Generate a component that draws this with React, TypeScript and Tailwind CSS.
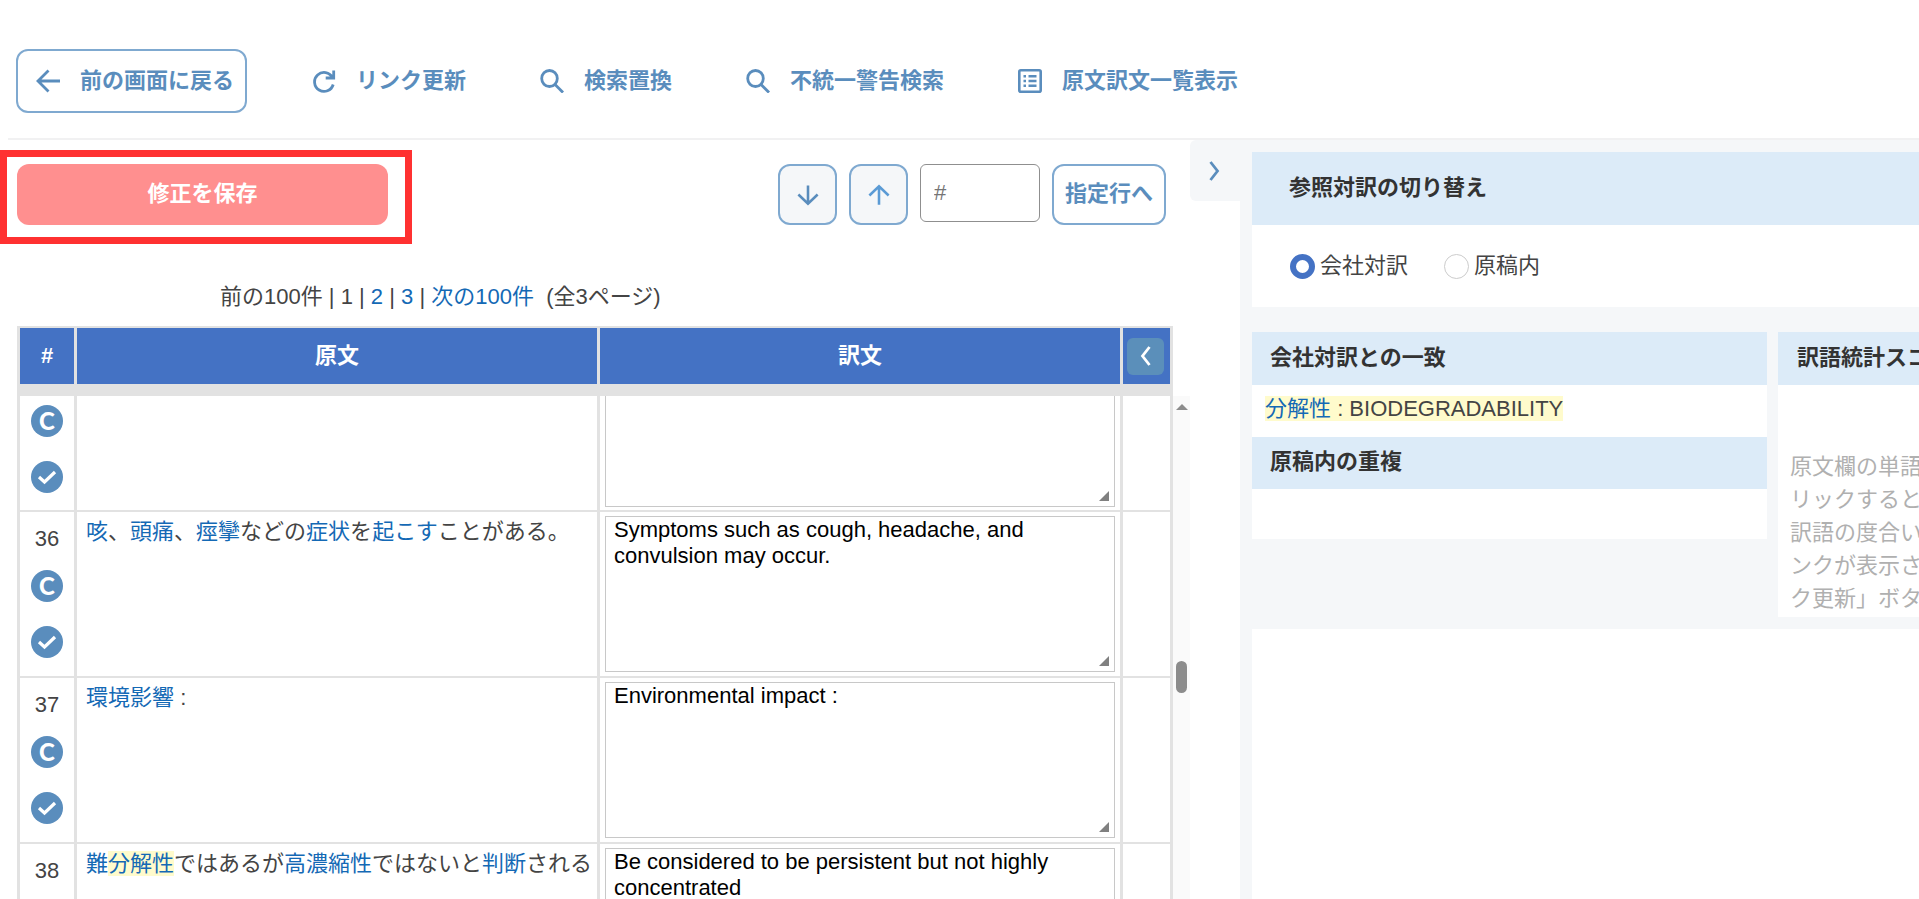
import type { ReactNode } from "react";

type Part = { text: string; kind?: "link" | "hit" };

type Row = { id: number; source: Part[]; target: string };

const rows: Row[] = [
  {
    id: 36,
    source: [
      { text: "咳", kind: "link" },
      { text: "、" },
      { text: "頭痛", kind: "link" },
      { text: "、" },
      { text: "痙攣", kind: "link" },
      { text: "などの" },
      { text: "症状", kind: "link" },
      { text: "を" },
      { text: "起こす", kind: "link" },
      { text: "ことがある。" },
    ],
    target: "Symptoms such as cough, headache, and convulsion may occur.",
  },
  {
    id: 37,
    source: [{ text: "環境影響", kind: "link" }, { text: " :" }],
    target: "Environmental impact :",
  },
  {
    id: 38,
    source: [
      { text: "難", kind: "link" },
      { text: "分解性", kind: "hit" },
      { text: "ではあるが" },
      { text: "高濃縮性", kind: "link" },
      { text: "ではないと" },
      { text: "判断", kind: "link" },
      { text: "される" },
    ],
    target: "Be considered to be persistent but not highly concentrated",
  },
];

function Icon({ children, className = "size-6" }: { children: ReactNode; className?: string }) {
  return (
    <svg
      viewBox="0 0 24 24"
      className={`${className} shrink-0`}
      fill="none"
      stroke="currentColor"
      strokeWidth="2.8"
      aria-hidden="true"
    >
      {children}
    </svg>
  );
}

const SearchIcon = () => (
  <Icon>
    <ellipse cx="9.5" cy="9.5" rx="7.8" ry="8" />
    <path d="M14.8 15.2l8.200 8.300" />
  </Icon>
);

function NavButton({ icon, label }: { icon: ReactNode; label: string }) {
  return (
    <button className="flex items-center gap-5 whitespace-nowrap">
      {icon}
      <span className="pb-[2px]">{label}</span>
    </button>
  );
}

function RowButtons() {
  return (
    <>
      <button
        aria-label="コピー"
        className="flex size-8 items-center justify-center rounded-full bg-[#5a8dbd] font-['Lato',sans-serif] text-2xl leading-8 font-black text-white"
      >
        C
      </button>
      <button
        aria-label="確定"
        className="flex size-8 items-center justify-center rounded-full bg-[#5a8dbd] text-white"
      >
        <svg viewBox="0 0 32 32" className="size-8" fill="none" stroke="currentColor" strokeWidth="3.2" aria-hidden="true">
          <path d="M8 16l5.500 5L24 11" />
        </svg>
      </button>
    </>
  );
}

function TargetBox({ id, value, cut }: { id: number; value: string; cut?: boolean }) {
  return (
    <div className="relative">
      <textarea
        aria-label={`訳文 ${id}`}
        defaultValue={value}
        className={
          cut
            ? "block h-[111px] w-full resize-none border border-t-0 border-[#c8c8c8] bg-white"
            : "block h-[156px] w-full resize-none overflow-hidden border border-[#c8c8c8] bg-white px-2 leading-[26px] text-black"
        }
      />
      <svg viewBox="0 0 10 10" className="absolute right-[6px] bottom-[6px] size-[10px] text-[#808080]" fill="currentColor" aria-hidden="true">
        <path d="M10 0v10H0z" />
      </svg>
    </div>
  );
}

function SourceText({ parts }: { parts: Part[] }) {
  return (
    <>
      {parts.map((p, i) =>
        p.kind ? (
          <a key={i} href="#" className={p.kind === "hit" ? "bg-[#fffbcc] text-[#1469b5]" : "text-[#1469b5]"}>
            {p.text}
          </a>
        ) : (
          <span key={i}>{p.text}</span>
        ),
      )}
    </>
  );
}

function SegmentTable() {
  return (
    <table className="w-full table-fixed border-separate border-spacing-x-[3px] border-spacing-y-[2px] bg-[#e2e2e2]">
      <colgroup>
        <col className="w-[54px]" />
        <col />
        <col />
        <col className="w-[47px]" />
      </colgroup>
      <thead>
        <tr className="h-[56px] bg-[#4472c4] text-white">
          <th className="px-0 pt-0 pb-[2px]">#</th>
          <th className="px-0 pt-0 pb-[2px]">原文</th>
          <th className="px-0 pt-0 pb-[2px]">訳文</th>
          <th className="p-0">
            <button aria-label="列を開く" className="ml-1 flex size-[37px] items-center justify-center rounded-md bg-[#5b8fba]">
              <Icon>
                <path d="M15.500 3L8.500 12l7 9" />
              </Icon>
            </button>
          </th>
        </tr>
      </thead>
      <tbody>
        <tr className="h-2">
          <td colSpan={4} className="p-0" />
        </tr>
        <tr className="h-[114px] bg-white align-top">
          <td className="p-0">
            <div className="flex flex-col items-center gap-6 pt-[9px]">
              <RowButtons />
            </div>
          </td>
          <td />
          <td className="px-[5px] py-0">
            <TargetBox id={35} value="" cut />
          </td>
          <td />
        </tr>
        {rows.map((r) => (
          <tr key={r.id} className="h-[164px] bg-white align-top">
            <td className="p-0">
              <div className="flex flex-col items-center gap-6 pt-3">
                <span className="-mb-2 leading-[30px]">{r.id}</span>
                <RowButtons />
              </div>
            </td>
            <td className="py-1 pr-0 pl-[9px] leading-8">
              <SourceText parts={r.source} />
            </td>
            <td className="px-[5px] py-1">
              <TargetBox id={r.id} value={r.target} />
            </td>
            <td />
          </tr>
        ))}
      </tbody>
    </table>
  );
}

function Toolbar() {
  return (
    <div className="flex items-start justify-between pr-6">
      <div className="border-[7px] border-[#ff3131] pt-[7px] pr-[17px] pb-3 pl-[10px]">
        <button className="h-[61px] w-[371px] rounded-xl bg-[#ff8f8f] pb-[2px] font-bold text-white">修正を保存</button>
      </div>
      <div className="flex gap-3 pt-[14px] text-[#5a8dbd]">
        <button aria-label="次へ" className="flex h-[61px] w-[59px] items-center justify-center rounded-xl border-2 border-[#7fa9d0] bg-[#f5f7f9]">
          <Icon className="size-[22px]">
            <path d="M12 1.500v20M1.500 11.500l10.500 10 10.500-10" />
          </Icon>
        </button>
        <button aria-label="前へ" className="flex h-[61px] w-[59px] items-center justify-center rounded-xl border-2 border-[#7fa9d0] bg-[#f5f7f9] text-[#5b9bd5]">
          <Icon className="size-[22px]">
            <path d="M12 22.500v-20M1.500 12.500l10.500-10 10.500 10" />
          </Icon>
        </button>
        <input
          aria-label="行番号"
          placeholder="#"
          className="h-[58px] w-[120px] rounded-md border border-[#8f8f8f] bg-white px-[13px] text-[#333] placeholder:text-[#757575]"
        />
        <button className="h-[61px] w-[114px] rounded-xl border-2 border-[#7fa9d0] bg-white pb-[2px] font-bold whitespace-nowrap">
          指定行へ
        </button>
      </div>
    </div>
  );
}

function Pager() {
  return (
    <nav className="mt-[37px] mb-[13px] pl-[220px] leading-8 whitespace-pre">
      前の100件 | 1 | <a href="#" className="text-[#1469b5]">2</a> | <a href="#" className="text-[#1469b5]">3</a> |{" "}
      <a href="#" className="text-[#1469b5]">次の100件</a>
      {"  "}(全3ページ)
    </nav>
  );
}

function ReferencePane() {
  return (
    <aside className="flex w-[679px] shrink-0 flex-col overflow-hidden bg-[#f5f7f9] pt-3 pl-3">
      <section className="bg-white">
        <h2 className="bg-[#dcebf8] pt-[19px] pb-[21px] pl-[37px] leading-[33px] font-bold text-[#333]">参照対訳の切り替え</h2>
        <div className="flex h-[82px] items-center gap-9 pl-[38px]">
          <label className="flex items-center gap-[5px]">
            <input
              type="radio"
              name="ref"
              defaultChecked
              className="size-[25px] appearance-none rounded-full border border-[#ccc] bg-white checked:border-[6px] checked:border-[#4472c4]"
            />
            <span className="pb-[2px]">会社対訳</span>
          </label>
          <label className="flex items-center gap-[5px]">
            <input
              type="radio"
              name="ref"
              className="size-[25px] appearance-none rounded-full border border-[#ccc] bg-white checked:border-[6px] checked:border-[#4472c4]"
            />
            <span className="pb-[2px]">原稿内</span>
          </label>
        </div>
      </section>

      <div className="mt-[25px] flex items-start gap-[11px]">
        <section className="min-w-0 flex-1 bg-white">
          <h3 className="bg-[#dcebf8] pb-[2px] pl-[18px] leading-[51px] font-bold text-[#333]">会社対訳との一致</h3>
          <p className="h-[52px] pt-2 pl-[13px] leading-8">
            <span className="bg-[#fffbcc]">
              <a href="#" className="text-[#1469b5]">分解性</a> : BIODEGRADABILITY
            </span>
          </p>
          <h3 className="bg-[#dcebf8] pb-[2px] pl-[18px] leading-[50px] font-bold text-[#333]">原稿内の重複</h3>
          <div className="h-[50px]" />
        </section>
        <section className="w-[141px] shrink-0 overflow-hidden bg-white whitespace-nowrap">
          <h3 className="bg-[#dcebf8] pb-[2px] pl-[19px] leading-[51px] font-bold text-[#333]">訳語統計スコ</h3>
          <p className="pt-[65px] pb-[2px] pl-3 leading-[33px] text-[#b0b0b0]">
            原文欄の単語
            <br />
            リックすると
            <br />
            訳語の度合い
            <br />
            ンクが表示さ
            <br />
            ク更新」ボタ
          </p>
        </section>
      </div>

      <div className="mt-3 flex-1 bg-white" />
    </aside>
  );
}

export default function App() {
  return (
    <div className="flex h-screen flex-col overflow-hidden bg-white font-['Liberation_Sans','Noto_Sans_CJK_JP',sans-serif] text-[22px] text-[#444]">
      <header className="ml-2 flex items-center gap-[74px] border-b-2 border-[#f1f1f2] pt-[49px] pb-[25px] pl-2 font-bold text-[#5a8dbd]">
        <div className="-mr-[9px] flex">
          <button className="flex h-16 w-[231px] items-center gap-5 rounded-xl border-2 border-[#7fa9d0] pl-[18px] whitespace-nowrap">
            <Icon>
              <path d="M24 12H2M12.500 1.500L2 12l10.500 10.500" />
            </Icon>
            <span className="pb-[2px]">前の画面に戻る</span>
          </button>
        </div>
        <NavButton
          label="リンク更新"
          icon={
            <Icon>
              <path d="M21.200 15.500A9.500 9.500 0 1 1 20.500 8.500M21.700 1.500v7.500h-8" />
            </Icon>
          }
        />
        <NavButton label="検索置換" icon={<SearchIcon />} />
        <NavButton label="不統一警告検索" icon={<SearchIcon />} />
        <NavButton
          label="原文訳文一覧表示"
          icon={
            <Icon>
              <rect x="1.300" y="1.300" width="21.400" height="21.400" rx="1.500" strokeWidth="2.600" />
              <path d="M5.500 7.300h2.500M10.500 7.300h8M5.500 12h2.500M10.500 12h8M5.500 16.700h2.500M10.500 16.700h8" strokeWidth="2.400" />
            </Icon>
          }
        />
      </header>

      <main className="flex min-h-0 flex-1">
        <div className="min-w-0 flex-1 pt-[10px]">
          <Toolbar />
          <Pager />
          <div className="flex items-start pl-[17px]">
            <div className="min-w-0 flex-1">
              <SegmentTable />
            </div>
            <div className="mt-[70px] flex h-[600px] w-[17px] shrink-0 flex-col items-center bg-[#fafafa] pt-2">
              <svg viewBox="0 0 12 6" className="h-[6px] w-3" fill="#8c8c8c" aria-hidden="true">
                <path d="M6 0l6 6H0z" />
              </svg>
              <div className="mt-[251px] h-8 w-[11px] rounded-full bg-[#8c8c8c]" />
            </div>
          </div>
        </div>
        <div className="w-[50px] shrink-0">
          <button aria-label="参照欄を閉じる" className="flex h-[61px] w-full items-center justify-center rounded-l-md bg-[#f5f7f9] text-[#5a8dbd]">
            <Icon>
              <path d="M7.500 3l7 9-7 9" />
            </Icon>
          </button>
        </div>
        <ReferencePane />
      </main>
    </div>
  );
}
